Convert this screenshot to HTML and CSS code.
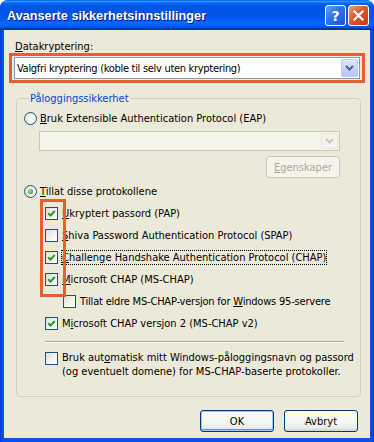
FILE: index.html
```html
<!DOCTYPE html>
<html lang="no">
<head>
<meta charset="utf-8">
<title>Avanserte sikkerhetsinnstillinger</title>
<link rel="stylesheet" href="styles.css">
</head>
<body>
<div class="window">
  <div class="titlebar">
    <span class="title">Avanserte sikkerhetsinnstillinger</span>
    <div class="tb-buttons">
      <span class="tb-btn help">?</span>
      <span class="tb-btn close">
        <svg width="13" height="13" viewBox="0 0 13 13"><path d="M2.5 2.5 L10.5 10.5 M10.5 2.5 L2.5 10.5" stroke="#fff" stroke-width="2.2" stroke-linecap="square"/></svg>
      </span>
    </div>
  </div>
  <div class="client">
    <div class="label"><u>D</u>atakryptering:</div>
    <div class="highlight">
      <div class="combo">
        <span class="combo-text tight">Valgfri kryptering (koble til selv uten kryptering)</span>
        <span class="combo-btn"><svg width="9" height="6" viewBox="0 0 9 6"><path d="M1 1 L4.5 4.5 L8 1" stroke="#4D6185" stroke-width="2" fill="none"/></svg></span>
      </div>
    </div>
    <fieldset class="group">
      <legend>Påloggingssikkerhet</legend>
      <div class="row">
        <span class="radio"></span><span><u>B</u>ruk Extensible Authentication Protocol (EAP)</span>
      </div>
      <div class="eap-block">
        <div class="combo disabled">
          <span class="combo-text"></span>
          <span class="combo-btn"><svg width="9" height="6" viewBox="0 0 9 6"><path d="M1 1 L4.5 4.5 L8 1" stroke="#C9C7BA" stroke-width="2" fill="none"/></svg></span>
        </div>
        <div class="btn-right"><span class="btn disabled-btn"><u>E</u>genskaper</span></div>
      </div>
      <div class="row row-allow">
        <span class="radio checked"></span><span><u>T</u>illat disse protokollene</span>
      </div>
      <div class="checks">
        <div class="marked">
          <div class="row cb-row"><span class="cb on"><svg width="9" height="9" viewBox="0 0 9 9"><path d="M1.2 4.2 L3.5 6.5 L7.8 2" stroke="#21A121" stroke-width="2" fill="none"/></svg></span><span><u>U</u>kryptert passord (PAP)</span></div>
          <div class="row cb-row"><span class="cb"></span><span><u>S</u>hiva Password Authentication Protocol (SPAP)</span></div>
          <div class="row cb-row"><span class="cb on"><svg width="9" height="9" viewBox="0 0 9 9"><path d="M1.2 4.2 L3.5 6.5 L7.8 2" stroke="#21A121" stroke-width="2" fill="none"/></svg></span><span class="focus"><u>C</u>hallenge Handshake Authentication Protocol (CHAP)</span></div>
          <div class="row cb-row"><span class="cb on"><svg width="9" height="9" viewBox="0 0 9 9"><path d="M1.2 4.2 L3.5 6.5 L7.8 2" stroke="#21A121" stroke-width="2" fill="none"/></svg></span><span><u>M</u>icrosoft CHAP (MS-CHAP)</span></div>
        </div>
        <div class="row cb-row sub"><span class="cb"></span><span class="slight">Tillat eldre MS-CHAP-versjon for <u>W</u>indows 95-servere</span></div>
        <div class="row cb-row"><span class="cb on"><svg width="9" height="9" viewBox="0 0 9 9"><path d="M1.2 4.2 L3.5 6.5 L7.8 2" stroke="#21A121" stroke-width="2" fill="none"/></svg></span><span>M<u>i</u>crosoft CHAP versjon 2 (MS-CHAP v2)</span></div>
        <div class="sep"></div>
        <div class="row cb-row multi"><span class="cb"></span><span class="multi-text">Bruk aut<u>o</u>matisk mitt Windows-påloggingsnavn og passord<br>(og eventuelt domene) for MS-CHAP-baserte protokoller.</span></div>
      </div>
    </fieldset>
    <div class="actions">
      <span class="btn default">OK</span>
      <span class="btn">Avbryt</span>
    </div>
  </div>
</div>
</body>
</html>
```

FILE: styles.css
```css
* { box-sizing: border-box; }
html, body { margin: 0; padding: 0; background: #fff; }
body { font-family: "DejaVu Sans Condensed", "Liberation Sans", sans-serif; font-size: 11px; color: #000; }

.window {
  width: 374px;
  height: 442px;
  display: flex;
  flex-direction: column;
  background: linear-gradient(to right, #0831D9 0, #0054E3 2px, #0055EA 4px, #0055EA 370px, #0054E3 372px, #0831D9 374px);
  border-radius: 8px 8px 0 0;
  overflow: hidden;
}

.titlebar {
  height: 30px;
  flex: none;
  display: flex;
  align-items: center;
  justify-content: space-between;
  padding: 0 5px 0 7px;
  background: linear-gradient(to bottom, #0058EE 0%, #3593FF 4%, #288EFF 6%, #127DFF 8%, #036FFC 10%, #0262EE 14%, #0057E5 20%, #0054E3 24%, #0055EB 56%, #005BF5 66%, #026AFE 76%, #0062EF 86%, #0052D6 92%, #0040AB 94%, #003092 100%);
}
.title {
  color: #fff;
  font-family: "Liberation Sans", Arial, sans-serif;
  font-weight: bold;
  font-size: 12.7px;
  text-shadow: 1px 1px 0 #0F1089;
  padding-top: 1px;
}
.tb-buttons { display: flex; gap: 2px; padding-top: 1px; }
.tb-btn {
  width: 21px;
  height: 21px;
  border: 1px solid #fff;
  border-radius: 3px;
  display: flex;
  align-items: center;
  justify-content: center;
  color: #fff;
  font-family: "DejaVu Sans", sans-serif;
  font-weight: bold;
  font-size: 14px;
}
.help {
  background: linear-gradient(135deg, #6E9BF7 0%, #2F6EEB 45%, #1D55D6 100%);
}
.close {
  background: linear-gradient(135deg, #F09C82 0%, #E3552A 45%, #C83A14 100%);
}

.client {
  flex: 1;
  margin: 0 4px 4px 4px;
  background: #ECE9D8;
  padding: 10px 12px 0 0;
  display: flex;
  flex-direction: column;
}

.label { margin-left: 11px; line-height: 13px; height: 13px; }

.highlight {
  margin-left: 5px;
  width: 356px;
  border: 3px solid #E65F2F;
  padding: 1px 2px;
}
.combo {
  height: 22px;
  border: 1px solid #7F9DB9;
  background: #fff;
  display: flex;
  align-items: center;
  justify-content: space-between;
  padding: 1px;
}
.combo-text { padding-left: 1px; }
.tight { letter-spacing: -0.3px; }
.slight { letter-spacing: -0.2px; }
.combo-btn {
  width: 17px;
  height: 100%;
  border: 1px solid #B6CAF5;
  border-radius: 2px;
  background: linear-gradient(to bottom, #E0E9FD 0%, #C5D6FB 50%, #B3C8F8 100%);
  display: flex;
  align-items: center;
  justify-content: center;
}
.combo.disabled { border-color: #C9C7BA; background: #F5F4EA; height: 20px; }
.combo.disabled .combo-btn { border-color: #E8E6DC; background: #F3F2EC; }

.group {
  margin: 9px 0 0 12px;
  width: 345px;
  border: 1px solid #D0D0BF;
  border-radius: 4px;
  padding: 5px 7px 17px 7px;
  min-inline-size: 0;
}
.group legend {
  color: #0046D5;
  padding: 0 1px;
  margin-left: 5px;
  line-height: 13px;
}

.row {
  display: flex;
  align-items: center;
  height: 16px;
  gap: 3px;
}
.radio {
  width: 13px;
  height: 13px;
  border-radius: 50%;
  border: 1px solid #1C5180;
  background: radial-gradient(circle at 60% 60%, #FFFFFF 0%, #F3F3EF 40%, #DCDCD7 100%);
  flex: none;
  display: flex;
  align-items: center;
  justify-content: center;
}
.radio.checked::after {
  content: "";
  width: 5px;
  height: 5px;
  border-radius: 50%;
  background: radial-gradient(circle at 40% 40%, #A6E8A6 0%, #4BC14B 50%, #1A8F1A 100%);
}

.eap-block { margin: 5px 0 0 15px; width: 301px; }
.btn-right { display: flex; justify-content: flex-end; margin-top: 5px; }

.btn {
  width: 74px;
  height: 22px;
  border: 1px solid #003C74;
  border-radius: 3px;
  background: linear-gradient(to bottom, #FFFFFF 0%, #F4F4F0 60%, #ECEBE6 85%, #D6D0C5 100%);
  display: flex;
  align-items: center;
  justify-content: center;
}
.disabled-btn {
  border-color: #C9C7BA;
  background: #F5F4EA;
  color: #ACA899;
}
.btn.default {
  box-shadow: inset 0 0 0 1px #A4C0F4, inset 0 -1px 0 1px #6E8FD8;
}

.row-allow { margin-top: 5px; }
.checks { padding-left: 21px; margin-top: 6px; }
.marked { position: relative; display: flex; flex-direction: column; gap: 6px; }
.marked::before {
  content: "";
  position: absolute;
  left: -5px;
  top: -6px;
  width: 20px;
  height: 92px;
  border: 3px solid #E65F2F;
  pointer-events: none;
}
.cb-row { gap: 4px; }
.checks > .cb-row { margin-top: 6px; }
.cb {
  width: 13px;
  height: 13px;
  border: 1px solid #1C5180;
  background: linear-gradient(135deg, #DCDCD7 0%, #F3F3EF 55%, #FFFFFF 100%);
  flex: none;
  display: flex;
  align-items: center;
  justify-content: center;
}
.focus { outline: 1px dotted #000; outline-offset: 0; line-height: 13px; }
.sub { padding-left: 18px; }
.sep {
  margin: 10px 0 0 0;
  width: 299px;
  height: 2px;
  border-top: 1px solid #ACA899;
  border-bottom: 1px solid #fff;
}
.checks > .multi { margin-top: 8px; height: auto; align-items: flex-start; line-height: 14px; }
.multi .cb { margin-top: 1px; }
.multi-text { white-space: nowrap; }

.actions {
  display: flex;
  justify-content: flex-end;
  gap: 10px;
  margin-top: 13px;
}
```
